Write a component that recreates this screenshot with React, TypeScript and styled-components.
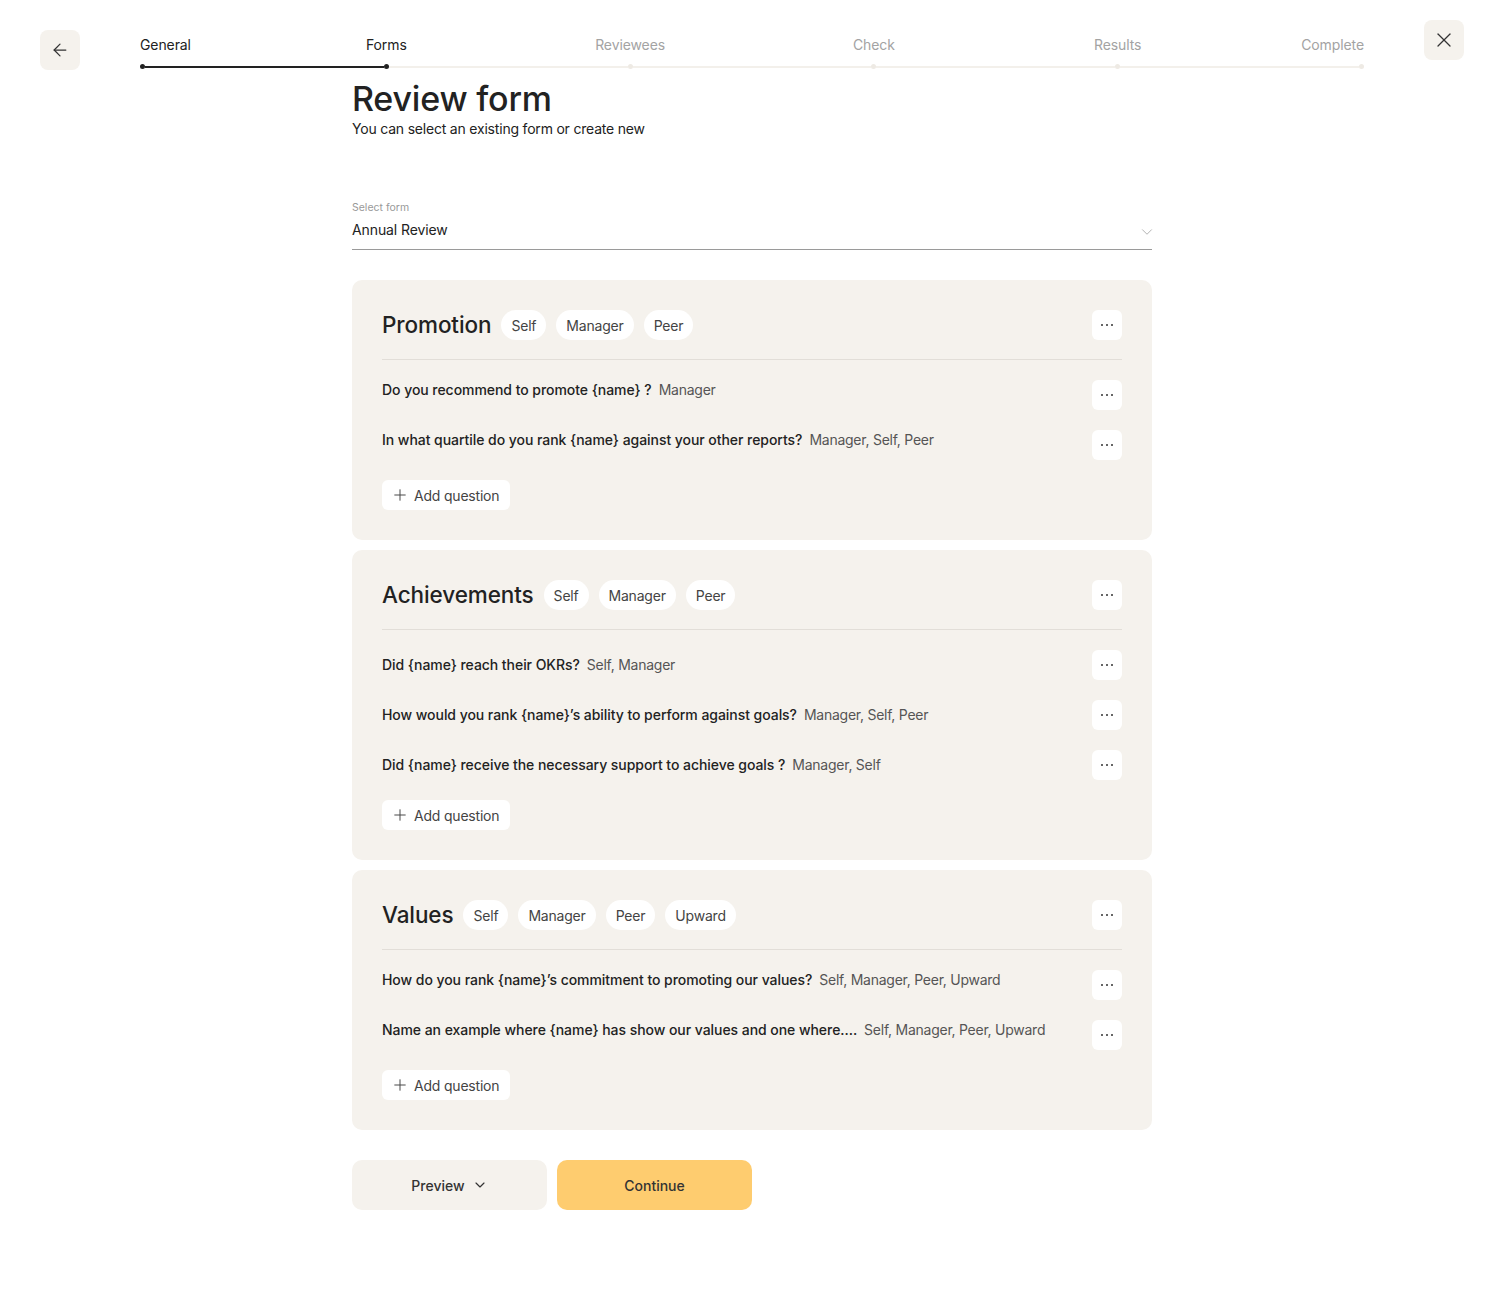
import { createGlobalStyle } from 'styled-components'
import styled from 'styled-components'
import { ArrowLeft, ChevronDown, Plus, X } from 'lucide-react'

const GlobalStyle = createGlobalStyle`
  body {
    margin: 0;
    background: #fff;
    color: #222;
    font-family: Inter, "Noto Sans", "Liberation Sans", sans-serif;
    -webkit-font-smoothing: antialiased;
  }
`

interface Question {
  text: string
  roles: string
}

interface Section {
  title: string
  chips: string[]
  centered?: boolean
  questions: Question[]
}

const steps = ['General', 'Forms', 'Reviewees', 'Check', 'Results', 'Complete']
const activeStep = 1

const sections: Section[] = [
  {
    title: 'Promotion',
    chips: ['Self', 'Manager', 'Peer'],
    questions: [
      { text: 'Do you recommend to promote {name} ?', roles: 'Manager' },
      {
        text: 'In what quartile do you rank {name} against your other reports?',
        roles: 'Manager, Self, Peer'
      }
    ]
  },
  {
    title: 'Achievements',
    chips: ['Self', 'Manager', 'Peer'],
    centered: true,
    questions: [
      { text: 'Did {name} reach their OKRs?', roles: 'Self, Manager' },
      {
        text: 'How would you rank {name}’s ability to perform against goals?',
        roles: 'Manager, Self, Peer'
      },
      {
        text: 'Did {name} receive the necessary support to achieve goals ?',
        roles: 'Manager, Self'
      }
    ]
  },
  {
    title: 'Values',
    chips: ['Self', 'Manager', 'Peer', 'Upward'],
    questions: [
      {
        text: 'How do you rank {name}’s commitment to promoting our values?',
        roles: 'Self, Manager, Peer, Upward'
      },
      {
        text: 'Name an example where {name} has show our values and one where....',
        roles: 'Self, Manager, Peer, Upward'
      }
    ]
  }
]

const Header = styled.header`
  display: grid;
  grid-template-columns: 40px 1fr 40px;
  column-gap: 60px;
  align-items: start;
  padding: 20px 40px 0;
`

const IconButton = styled.button<{ $offset?: number }>`
  width: 40px;
  height: 40px;
  margin-top: ${(p) => p.$offset ?? 0}px;
  border: 0;
  border-radius: 8px;
  background: #f5f2ed;
  color: #333;
  display: flex;
  align-items: center;
  justify-content: center;
  padding: 0;
  cursor: pointer;
`

const Stepper = styled.nav`
  display: flex;
  align-items: flex-end;
  margin-top: 16px;
`

const Step = styled.div<{ $align: string }>`
  width: 5px;
  display: flex;
  flex-direction: column;
  align-items: ${(p) => p.$align};
  gap: 11px;
`

const StepLabel = styled.span<{ $done: boolean }>`
  font-size: 14px;
  line-height: 17px;
  letter-spacing: -0.1px;
  white-space: nowrap;
  color: ${(p) => (p.$done ? '#222' : '#a3a3a3')};
`

const Dot = styled.span<{ $done: boolean }>`
  width: 5px;
  height: 5px;
  border-radius: 50%;
  background: ${(p) => (p.$done ? '#222' : '#eeeae4')};
`

const Segment = styled.span<{ $done: boolean }>`
  flex: 1;
  height: 2px;
  margin-bottom: 1.5px;
  background: ${(p) => (p.$done ? '#222' : '#f3f0eb')};
`

const Main = styled.main`
  width: 800px;
  margin: 7px auto 0;
  padding-bottom: 100px;
`

const Title = styled.h1`
  margin: 0;
  font-size: 34px;
  line-height: 43px;
  font-weight: 500;
  color: #222;
  letter-spacing: -0.2px;
`

const Subtitle = styled.p`
  margin: 0;
  font-size: 14px;
  line-height: 18px;
  letter-spacing: -0.2px;
  color: #222;
`

const SelectField = styled.div`
  margin-top: 63px;
  padding-bottom: 10px;
  border-bottom: 1px solid #9a9a9a;
`

const SelectLabel = styled.div`
  font-size: 10.5px;
  line-height: 14px;
  color: #999;
`

const SelectValue = styled.div`
  margin-top: 6px;
  height: 18px;
  display: flex;
  align-items: center;
  justify-content: space-between;
  font-size: 14px;
  line-height: 18px;
  letter-spacing: -0.1px;
  color: #222;

  svg {
    display: block;
    color: #999;
    margin: 4px -4px 0 0;
  }
`

const Cards = styled.div`
  display: flex;
  flex-direction: column;
  gap: 10px;
  margin-top: 30px;
`

const Card = styled.section`
  background: #f5f2ed;
  border-radius: 10px;
  padding: 30px;
`

const CardHeader = styled.div`
  display: flex;
  align-items: center;
  gap: 10px;
  padding-bottom: 19px;
  border-bottom: 1px solid #e2ded8;
`

const CardTitle = styled.h2`
  margin: 0;
  font-size: 22.5px;
  line-height: 30px;
  font-weight: 500;
  letter-spacing: -0.1px;
  color: #222;
`

const Chip = styled.span`
  height: 30px;
  padding: 0 10px;
  border-radius: 15px;
  background: #fff;
  font-size: 14px;
  letter-spacing: -0.2px;
  color: #444;
  display: inline-flex;
  align-items: center;
`

const MoreButton = styled.button`
  width: 30px;
  height: 30px;
  margin-left: auto;
  flex-shrink: 0;
  border: 0;
  border-radius: 6px;
  background: #fff;
  display: flex;
  align-items: center;
  justify-content: center;
  gap: 3px;
  padding: 0;
  cursor: pointer;

  span {
    width: 2px;
    height: 2px;
    border-radius: 1px;
    background: #333;
  }
`

const Questions = styled.ol`
  list-style: none;
  margin: 0;
  padding: 20px 0 0;
  display: flex;
  flex-direction: column;
  gap: 20px;
`

const QuestionRow = styled.li<{ $centered?: boolean }>`
  display: flex;
  align-items: ${(p) => (p.$centered ? 'center' : 'flex-start')};
  min-height: 30px;
`

const QuestionText = styled.span`
  font-size: 14px;
  line-height: 20px;
  font-weight: 500;
  letter-spacing: -0.05px;
  color: #222;
`

const Roles = styled.span`
  font-weight: 400;
  letter-spacing: -0.25px;
  color: #555;
  margin-left: 7px;
`

const AddButton = styled.button`
  margin-top: 20px;
  height: 30px;
  padding: 0 11px 0 9px;
  border: 0;
  border-radius: 6px;
  background: #fff;
  display: inline-flex;
  align-items: center;
  gap: 5px;
  font-family: inherit;
  font-size: 14px;
  letter-spacing: -0.2px;
  color: #444;
  cursor: pointer;
`

const Actions = styled.div`
  display: flex;
  gap: 10px;
  margin-top: 30px;
`

const ActionButton = styled.button<{ $primary?: boolean }>`
  width: 195px;
  height: 50px;
  border: 0;
  border-radius: 10px;
  background: ${(p) => (p.$primary ? '#fecc6f' : '#f5f2ed')};
  display: flex;
  align-items: center;
  justify-content: center;
  gap: 7px;
  font-family: inherit;
  font-size: 14px;
  font-weight: 500;
  color: #333;
  cursor: pointer;
`

function More() {
  return (
    <MoreButton aria-label="More">
      <span />
      <span />
      <span />
    </MoreButton>
  )
}

function FormSection({ section }: { section: Section }) {
  return (
    <Card>
      <CardHeader>
        <CardTitle>{section.title}</CardTitle>
        {section.chips.map((chip) => (
          <Chip key={chip}>{chip}</Chip>
        ))}
        <More />
      </CardHeader>
      <Questions>
        {section.questions.map((q) => (
          <QuestionRow key={q.text} $centered={section.centered}>
            <QuestionText>
              {q.text}
              <Roles>{q.roles}</Roles>
            </QuestionText>
            <More />
          </QuestionRow>
        ))}
      </Questions>
      <AddButton>
        <Plus size={18} strokeWidth={1.3} />
        Add question
      </AddButton>
    </Card>
  )
}

export default function App() {
  return (
    <>
      <GlobalStyle />
      <Header>
        <IconButton $offset={10} aria-label="Back">
          <ArrowLeft size={20} strokeWidth={1.5} />
        </IconButton>
        <Stepper>
          {steps.map((step, i) => {
            const done = i <= activeStep
            const align = i === 0 ? 'flex-start' : i === steps.length - 1 ? 'flex-end' : 'center'
            return [
              i > 0 && <Segment key={`seg-${step}`} $done={i <= activeStep} />,
              <Step key={step} $align={align}>
                <StepLabel $done={done}>{step}</StepLabel>
                <Dot $done={done} />
              </Step>
            ]
          })}
        </Stepper>
        <IconButton aria-label="Close">
          <X size={24} strokeWidth={1.3} />
        </IconButton>
      </Header>
      <Main>
        <Title>Review form</Title>
        <Subtitle>You can select an existing form or create new</Subtitle>
        <SelectField>
          <SelectLabel>Select form</SelectLabel>
          <SelectValue>
            Annual Review
            <ChevronDown size={18} strokeWidth={1} />
          </SelectValue>
        </SelectField>
        <Cards>
          {sections.map((section) => (
            <FormSection key={section.title} section={section} />
          ))}
        </Cards>
        <Actions>
          <ActionButton>
            Preview
            <ChevronDown size={16} strokeWidth={1.75} />
          </ActionButton>
          <ActionButton $primary>Continue</ActionButton>
        </Actions>
      </Main>
    </>
  )
}
